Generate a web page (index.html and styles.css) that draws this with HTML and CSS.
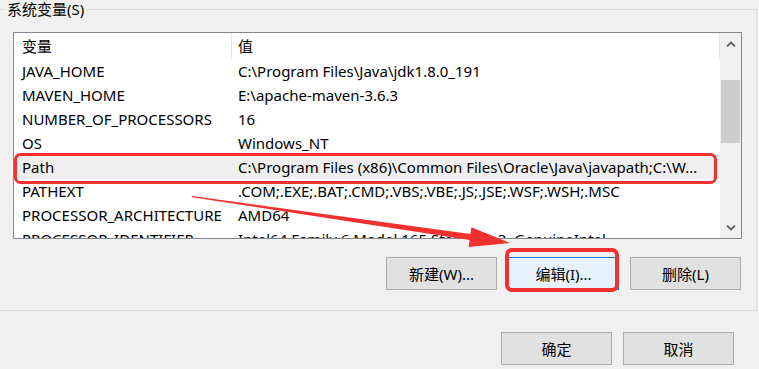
FILE: index.html
```html
<!DOCTYPE html>
<html lang="zh-CN">
<head>
<meta charset="utf-8">
<title>系统变量</title>
<link rel="stylesheet" href="styles.css">
</head>
<body>
<div class="window">
  <fieldset class="group">
    <legend class="legend">系统变量(S)</legend>
    <div class="listbox">
      <div class="list">
        <div class="row head"><div class="c1">变量</div><div class="c2">值</div></div>
        <div class="row"><div class="c1">JAVA_HOME</div><div class="c2">C:\Program Files\Java\jdk1.8.0_191</div></div>
        <div class="row"><div class="c1">MAVEN_HOME</div><div class="c2">E:\apache-maven-3.6.3</div></div>
        <div class="row"><div class="c1">NUMBER_OF_PROCESSORS</div><div class="c2">16</div></div>
        <div class="row"><div class="c1">OS</div><div class="c2">Windows_NT</div></div>
        <div class="row sel"><div class="c1">Path</div><div class="c2">C:\Program Files (x86)\Common Files\Oracle\Java\javapath;C:\W...</div></div>
        <div class="row"><div class="c1">PATHEXT</div><div class="c2">.COM;.EXE;.BAT;.CMD;.VBS;.VBE;.JS;.JSE;.WSF;.WSH;.MSC</div></div>
        <div class="row"><div class="c1">PROCESSOR_ARCHITECTURE</div><div class="c2">AMD64</div></div>
        <div class="row"><div class="c1">PROCESSOR_IDENTIFIER</div><div class="c2">Intel64 Family 6 Model 165 Stepping 3, GenuineIntel</div></div>
      </div>
      <div class="scrollbar">
        <div class="sb-btn"><svg width="10" height="6" viewBox="0 0 10 6"><polyline points="1,5.5 5,1.5 9,5.5" fill="none" stroke="#606060" stroke-width="1.8"/></svg></div>
        <div class="sb-track"><div class="sb-thumb"></div></div>
        <div class="sb-btn"><svg width="10" height="6" viewBox="0 0 10 6"><polyline points="1,0.5 5,4.5 9,0.5" fill="none" stroke="#606060" stroke-width="1.8"/></svg></div>
      </div>
    </div>
    <div class="btnrow">
      <button class="btn">新建(W)...</button>
      <button class="btn focus">编辑(I)...</button>
      <button class="btn">删除(L)</button>
    </div>
  </fieldset>
  <div class="footer">
    <button class="btn">确定</button>
    <button class="btn">取消</button>
  </div>
  <svg class="marks" width="759" height="369" viewBox="0 0 759 369">
    <rect x="15.5" y="154.5" width="700" height="28" rx="5" fill="none" stroke="#f23030" stroke-width="3"/>
    <rect x="507" y="250" width="110" height="40" rx="5" fill="none" stroke="#f23030" stroke-width="4"/>
    <polygon points="192,196 470.4,234.1 471.4,227.2 510,243 468.6,247 469.6,240.1 192,197.2" fill="#f23030"/>
  </svg>
</div>
</body>
</html>
```
FILE: styles.css
```css
html, body {
  margin: 0;
  padding: 0;
  background: #f0f0f0;
  overflow: hidden;
}
body {
  font-family: "Noto Sans", "Noto Sans CJK SC", sans-serif;
  font-size: 15px;
  color: #000;
}
.window {
  position: relative;
  width: 759px;
  height: 369px;
  overflow: hidden;
}
.group {
  margin: 0 2px 0 -4px;
  padding: 0 0 20px 0;
  border: 1px solid #dcdcdc;
  min-inline-size: 0;
}
.legend {
  margin-left: 8px;
  padding: 0 2px;
  line-height: 19px;
  height: 19px;
}
.listbox {
  margin: 13px 14px 0 16px;
  height: 205px;
  border: 1px solid #828790;
  background: #fff;
  display: flex;
}
.list {
  flex: 1;
  overflow: hidden;
  min-width: 0;
}
.row {
  display: flex;
  height: 24px;
  line-height: 24px;
  white-space: nowrap;
}
.row.head {
  height: 26px;
  line-height: 26px;
}
.row.sel {
  background: #efefef;
}
.c1 {
  width: 210px;
  padding-left: 8px;
  flex: none;
  overflow: hidden;
}
.c2 {
  flex: 1;
  padding-left: 6px;
  overflow: hidden;
  min-width: 0;
}
.head .c1 {
  width: 209px;
  border-right: 1px solid #e5e5e5;
}
.head .c2 {
  border-right: 1px solid #e5e5e5;
}
.scrollbar {
  width: 21px;
  flex: none;
  background: #f0f0f0;
  display: flex;
  flex-direction: column;
}
.sb-btn {
  height: 21px;
  display: flex;
  align-items: center;
  justify-content: center;
}
.sb-track {
  flex: 1;
  padding: 26px 1px 0 1px;
}
.sb-thumb {
  height: 63px;
  background: #cdcdcd;
}
.btnrow {
  display: flex;
  justify-content: flex-end;
  gap: 11px;
  margin: 18px 15px 0 0;
}
.btn {
  width: 111px;
  height: 33px;
  margin: 0;
  padding: 0;
  border: 1px solid #adadad;
  background: #e1e1e1;
  font-family: "Noto Sans", "Noto Sans CJK SC", sans-serif;
  font-size: 15px;
  color: #000;
}
.btn.focus {
  border-color: #0078d7;
  background: #e5f1fb;
}
.footer {
  display: flex;
  justify-content: flex-end;
  gap: 11px;
  margin: 21px 25px 0 0;
}
.marks {
  position: absolute;
  left: 0;
  top: 0;
  pointer-events: none;
}
```
